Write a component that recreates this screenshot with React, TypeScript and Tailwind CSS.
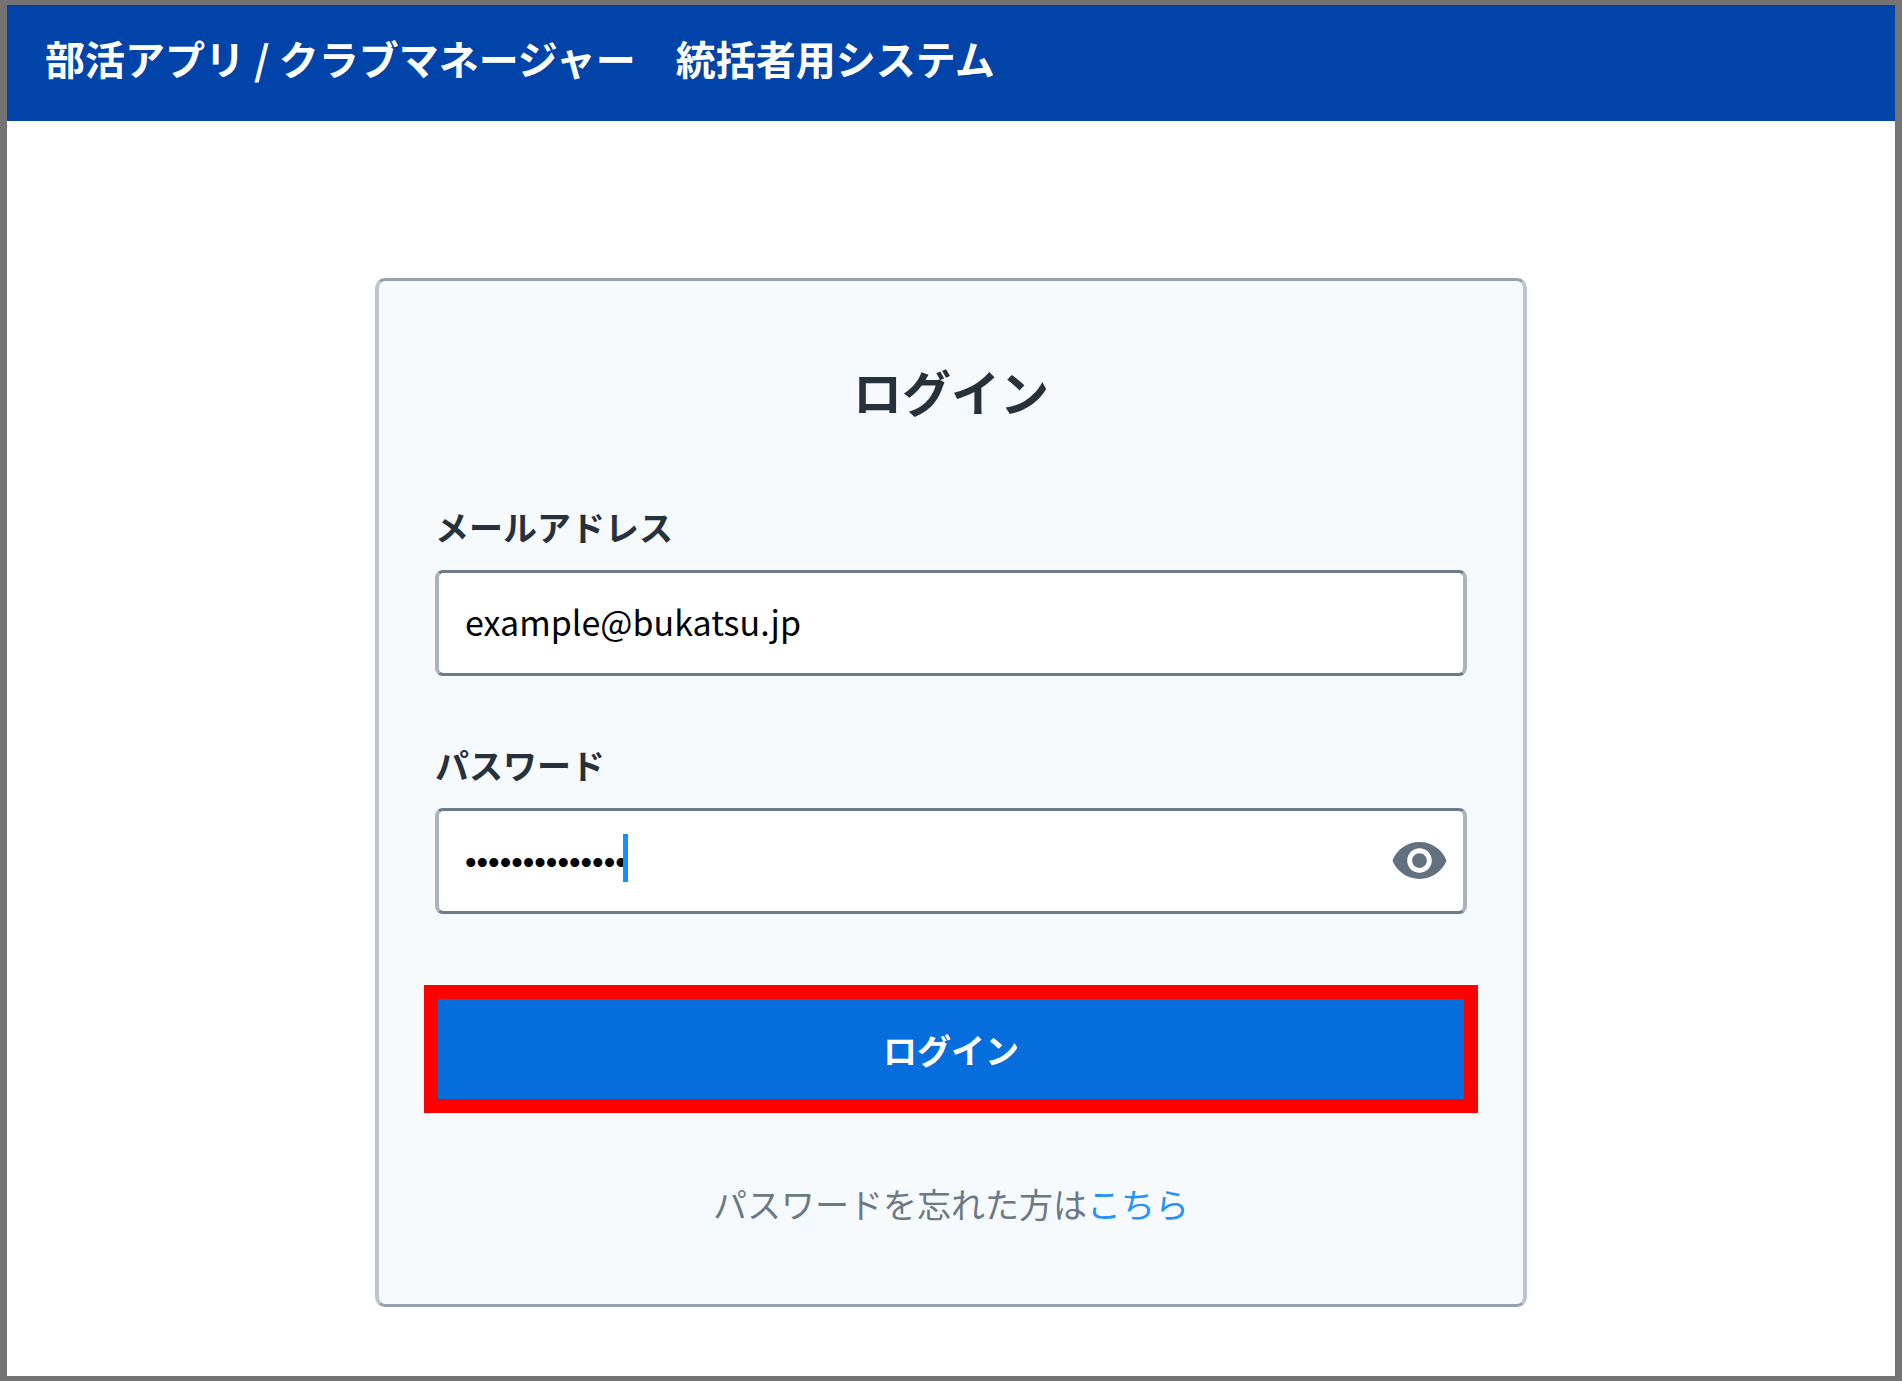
import React, { useState } from 'react';
import { MdVisibility } from 'react-icons/md';

const inputClass =
  'block w-full h-[106px] rounded-lg border-x-4 border-y-3 border-x-[#a9b4be] border-y-[#6c7b8a] bg-white pl-[26px] text-black outline-none';

const LoginForm: React.FC = () => {
  const [email, setEmail] = useState('example@bukatsu.jp');
  const [password, setPassword] = useState('bukatsu-login1');
  const [visible, setVisible] = useState(false);

  return (
    <form
      onSubmit={(e) => e.preventDefault()}
      className="w-full max-w-[1152px] rounded-[10px] border-x-4 border-y-3 border-x-[#bcc5ce] border-y-[#94a1b1] bg-[#f6fafd] px-14 pt-[74px] pb-[76px] text-[34px] leading-[48px]"
    >
      <h2 className="mb-[76px] text-center text-[49px] leading-[72px] font-bold text-[#27313b]">ログイン</h2>

      <div className="mb-[65px]">
        <label htmlFor="email" className="mb-[19px] block font-bold text-[#27313b]">メールアドレス</label>
        <input
          id="email"
          type="email"
          value={email}
          onChange={(e) => setEmail(e.target.value)}
          className={`${inputClass} pb-1`}
        />
      </div>

      <div className="mb-[71px]">
        <label htmlFor="password" className="mb-[19px] block font-bold text-[#27313b]">パスワード</label>
        <div className="relative">
          <input
            id="password"
            type={visible ? 'text' : 'password'}
            value={password}
            onChange={(e) => setPassword(e.target.value)}
            className={`${inputClass} pt-1 pr-24 text-[33px] font-['Liberation_Sans','Noto_Sans_CJK_JP',sans-serif]`}
          />
          {/* Text cursor */}
          <span className="pointer-events-none absolute top-[26px] left-[188px] h-12 w-[5px] bg-[#1290ff]"></span>
          <button
            type="button"
            aria-label="パスワードを表示"
            onClick={() => setVisible(!visible)}
            className="absolute inset-y-0 right-[18px] flex items-center pb-0.5 text-[#627080]"
          >
            <MdVisibility size={59} />
          </button>
        </div>
      </div>

      {/* Highlighted submit */}
      <div className="-mx-[11px] mb-[67px] border-[14px] border-[#ff0000]">
        <button type="submit" className="block h-[100px] w-full bg-[#056edc] pt-0.5 font-bold text-white">ログイン</button>
      </div>

      <p className="text-center text-[#6b7986]">
        パスワードを忘れた方は<a href="#" className="text-[#2492f8]">こちら</a>
      </p>
    </form>
  );
};

export default function App() {
  return (
    <div className="flex min-h-screen flex-col border-x-7 border-y-5 border-[#737373] bg-white font-['Noto_Sans_CJK_JP',sans-serif]">
      <header className="bg-[#0044a9] px-[38px] pt-[23px] pb-[33px]">
        <h1 className="text-[40px] leading-[60px] font-bold whitespace-pre text-white">部活アプリ / クラブマネージャー　統括者用システム</h1>
      </header>
      <main className="flex flex-1 justify-center px-6 pt-[157px] pb-[69px]">
        <LoginForm />
      </main>
    </div>
  );
}
